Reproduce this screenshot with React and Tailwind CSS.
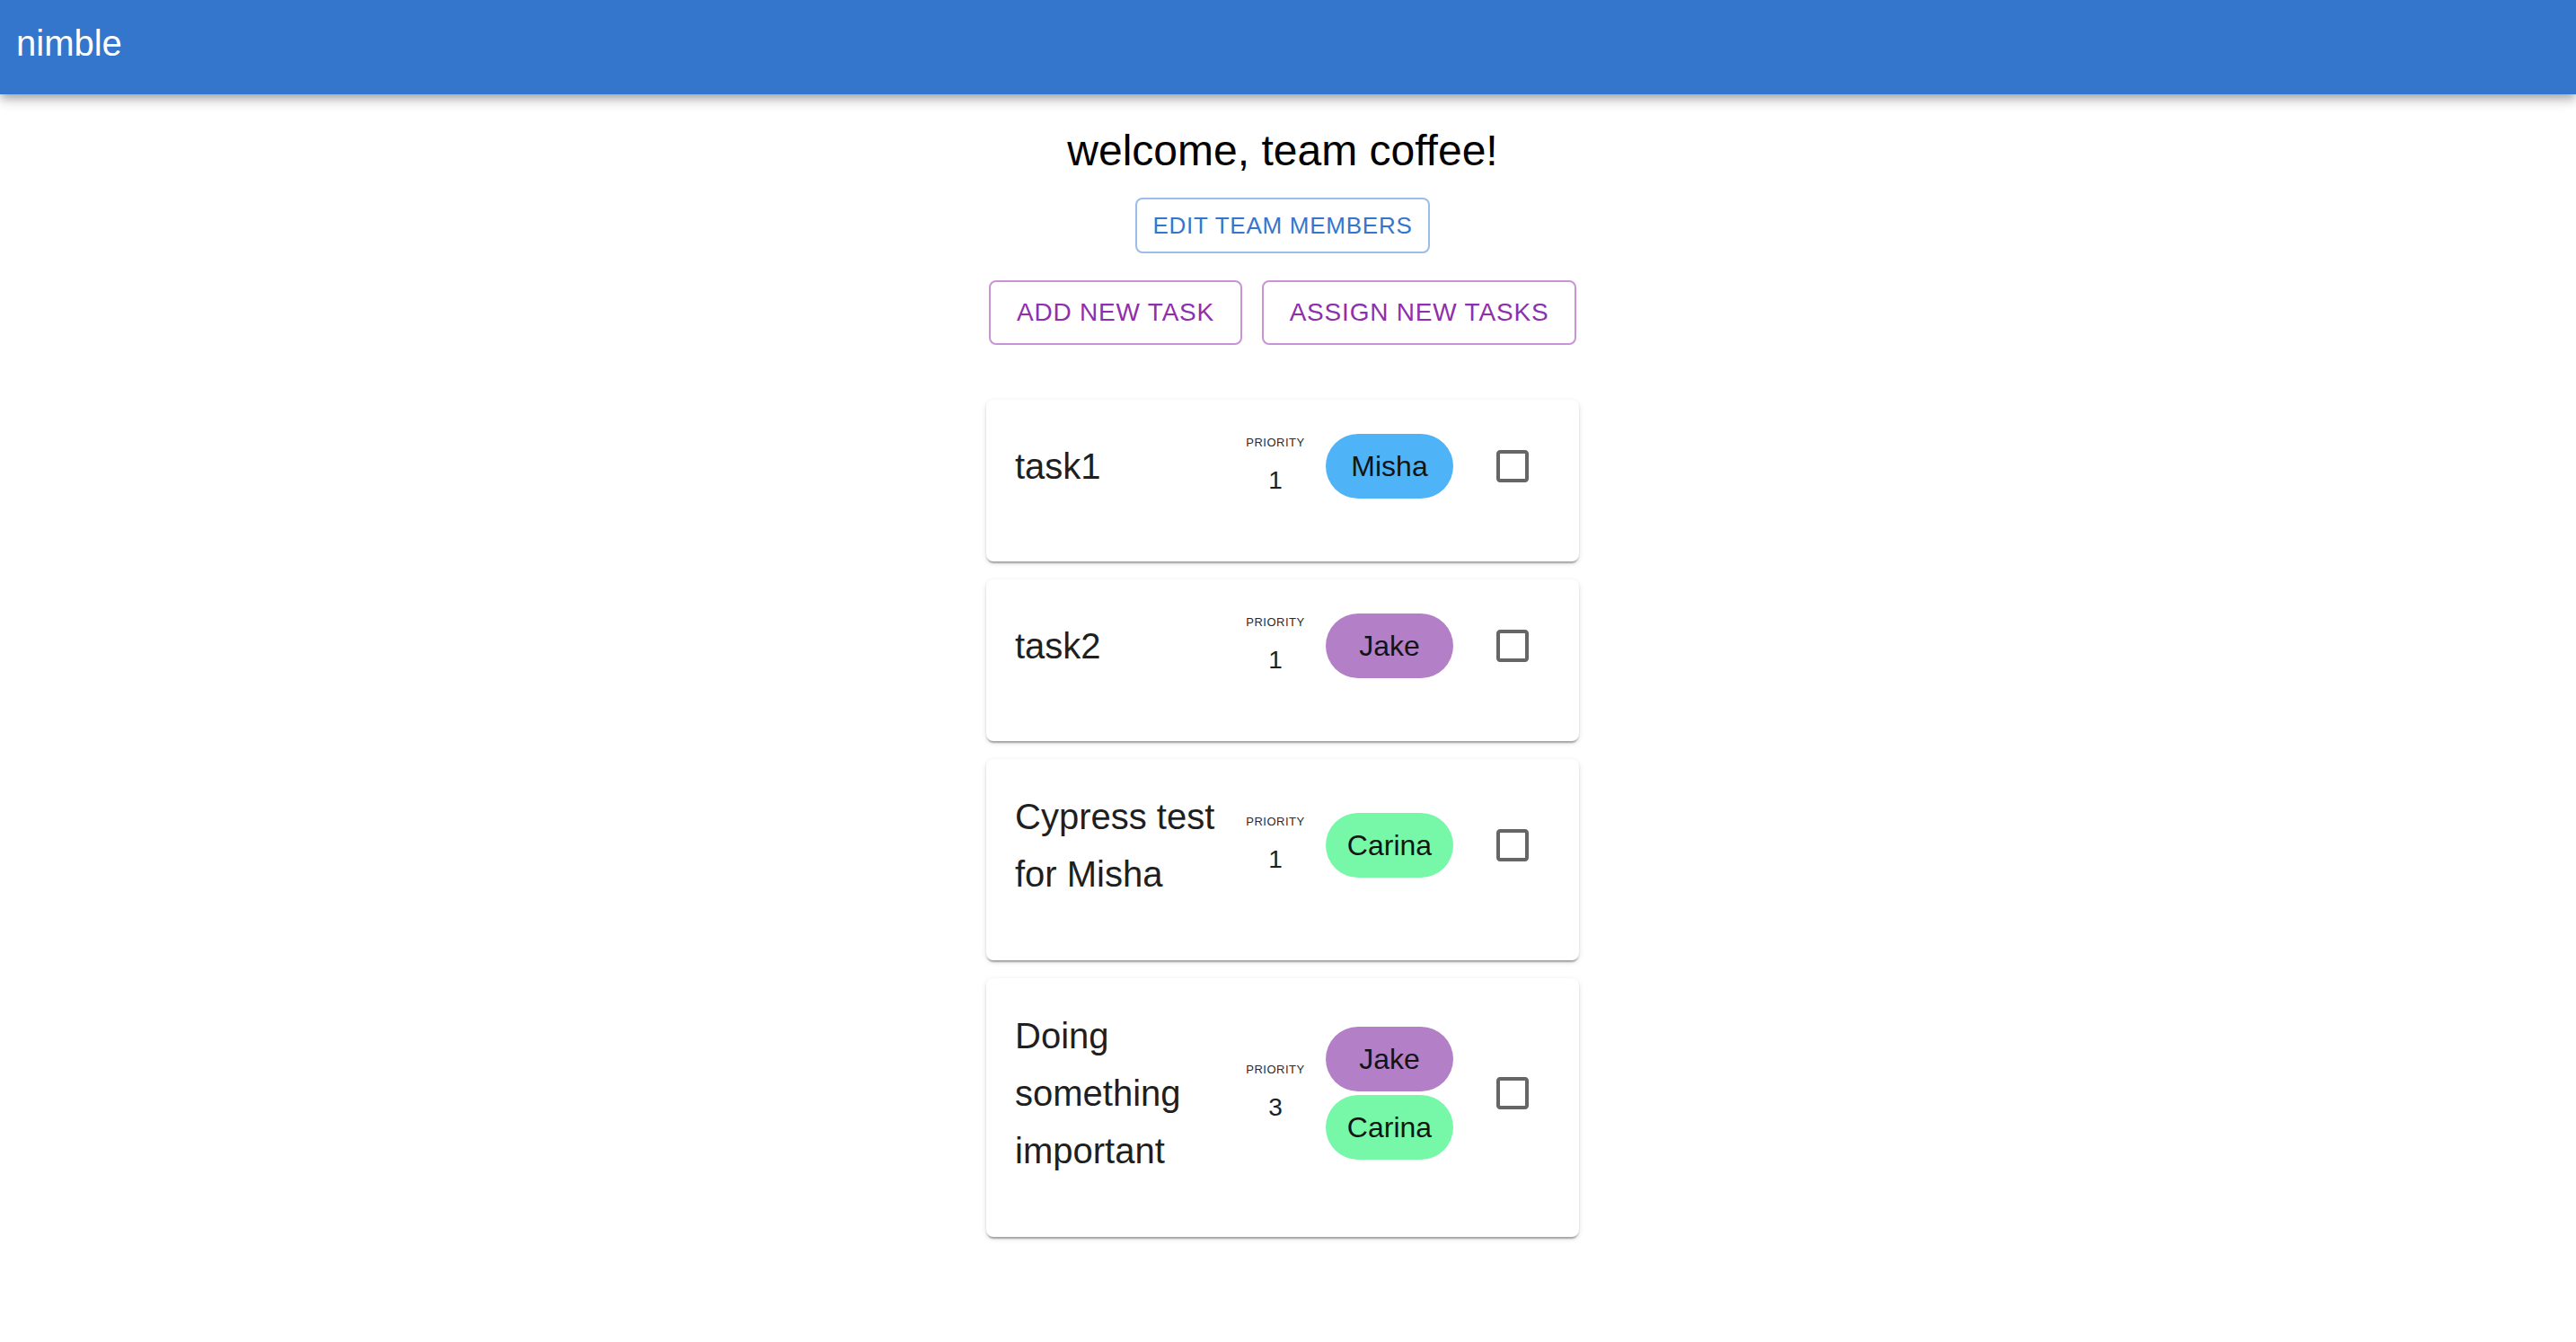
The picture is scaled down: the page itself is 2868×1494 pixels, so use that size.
import React from 'react'

const tasks = [
    { name: "task1", priority: 1, people: ["Misha"] },
    { name: "task2", priority: 1, people: ["Jake"] },
    { name: "Cypress test for Misha", priority: 1, people: ["Carina"] },
    { name: "Doing something important", priority: 3, people: ["Jake", "Carina"] },
];

const chipColors = {
    Misha: "bg-[#4eb4f7]",
    Jake: "bg-[#b380c8]",
    Carina: "bg-[#76f8a8]",
};

const CheckBlank = () => (
    <svg width="48" height="48" viewBox="0 0 24 24" fill="rgba(0,0,0,0.6)">
        <path d="M19 5v14H5V5h14m0-2H5c-1.1 0-2 .9-2 2v14c0 1.1.9 2 2 2h14c1.1 0 2-.9 2-2V5c0-1.1-.9-2-2-2z" />
    </svg>
);

const TaskCard = ({ task }) => {
  return (
    <div className='w-[660px] bg-white rounded-[8px] px-[32px] pt-[32px] pb-[64px] shadow-[0_4px_2px_-2px_rgba(0,0,0,0.2),0_2px_2px_0_rgba(0,0,0,0.14),0_2px_6px_0_rgba(0,0,0,0.12)]'>
        <div className='flex items-center gap-[24px]'>
            <div className='flex-1 min-w-0 text-[40px] leading-[64px] text-[#1f1f1f]'>{task.name}</div>

            <div className='w-[64px] flex flex-col items-center pt-[2px]'>
                <div className='text-[13px] leading-[16px] tracking-[0.5px] text-[#2b2b2b]'>PRIORITY</div>
                <div className='mt-[14px] text-[28px] leading-[40px] text-[#1f1f1f]'>{task.priority}</div>
            </div>

            <div className='flex flex-col gap-[4px]'>
                {task.people.map((p, i) => (
                    <div key={i} className={`w-[142px] h-[72px] rounded-full flex items-center justify-center text-[32px] text-[#141414] ${chipColors[p]}`}>
                        {p}
                    </div>
                ))}
            </div>

            <div className='w-[84px] h-[84px] flex items-center justify-center'>
                <CheckBlank />
            </div>
        </div>
    </div>
  )
}

const App = () => {
  return (
    <div className="min-h-screen bg-white font-['Liberation_Sans',Arial,sans-serif]">
      <header className='relative z-10 h-[105px] bg-[#3476cc] pl-[18px] pt-[16px] shadow-[0_4px_8px_-2px_rgba(0,0,0,0.2),0_8px_10px_0_rgba(0,0,0,0.14),0_2px_20px_0_rgba(0,0,0,0.12)]'>
        <div className='text-white text-[40px] leading-[64px]'>nimble</div>
      </header>

      <main className='flex flex-col items-center pr-[12px] pb-[80px]'>
        <h1 className='mt-[31px] text-[48px] leading-[64px] text-black'>welcome, team coffee!</h1>

        <button className='mt-[20px] w-[328px] h-[62px] border-2 border-[#9bbde9] rounded-[8px] text-[26px] tracking-[0.74px] text-[#3576cd]'>
            EDIT TEAM MEMBERS
        </button>

        <div className='mt-[30px] flex gap-[22px]'>
            <button className='w-[282px] h-[72px] border-2 border-[#c994d6] rounded-[8px] text-[28px] tracking-[0.8px] text-[#8e2fab]'>
                ADD NEW TASK
            </button>
            <button className='w-[350px] h-[72px] border-2 border-[#c994d6] rounded-[8px] text-[28px] tracking-[0.8px] text-[#8e2fab]'>
                ASSIGN NEW TASKS
            </button>
        </div>

        <div className='mt-[61px] flex flex-col gap-[20px]'>
            {tasks.map((task, index) => (
                <TaskCard key={index} task={task} />
            ))}
        </div>
      </main>
    </div>
  )
}

export default App
